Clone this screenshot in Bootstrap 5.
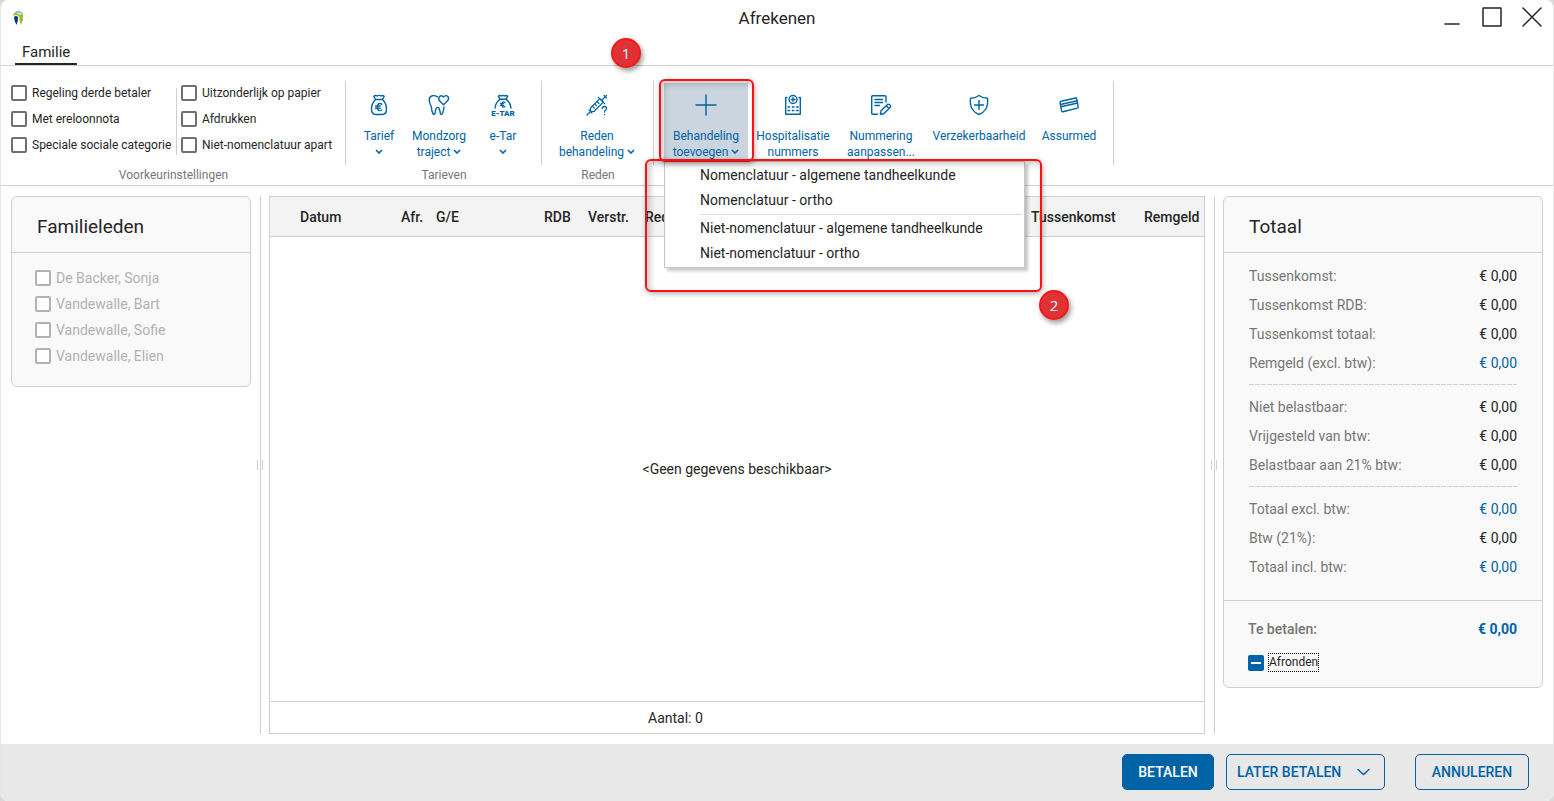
<!DOCTYPE html>
<html lang="nl">
<head>
<meta charset="utf-8">
<meta name="viewport" content="width=device-width, initial-scale=1">
<title>Afrekenen</title>
<link href="https://cdn.jsdelivr.net/npm/bootstrap@5.3.0/dist/css/bootstrap.min.css" rel="stylesheet">
<style>
  :root { --blue: #0063a6; --ink: #252525; --muted: #767676; --line: #cfcfcf; --panel: #f9f9f9; }
  body { font-family: Roboto, "Liberation Sans", sans-serif; font-size: 14px; line-height: 20px; color: var(--ink); background: #d9d9d9; }
  .app-window { background: #fff; border: solid #e6e6e6; border-width: 0 1px; border-radius: 8px; overflow: hidden; }
  svg.ico { fill: none; stroke: currentColor; stroke-width: 1.5; stroke-linecap: round; stroke-linejoin: round; display: block; }

  /* title bar */
  .titlebar { display: grid; grid-template-columns: 1fr auto 1fr; height: 40px; padding: 0 11px; }
  .titlebar h1 { font-size: 17px; line-height: 36px; margin: 0; font-weight: 400; }
  .win-controls { gap: 20px; padding-top: 7px; }
  .win-controls button { border: 0; background: none; padding: 0; color: inherit; }

  /* ribbon */
  .tabs-row { padding-left: 14px; border-bottom: 1px solid var(--line); }
  .ribbon-tab { font-size: 15px; line-height: 21px; padding: 2px 7px 0; color: var(--ink); text-decoration: none; border-bottom: 2px solid var(--ink); }
  .ribbon { padding-top: 15px; border-bottom: 1px solid var(--line); font-size: 12px; line-height: 16px; }
  .ribbon-group { text-align: center; }
  .ribbon-items { height: 84px; border-right: 1px solid var(--line); padding: 0 9px 0 8px; }
  .ribbon-items.prefs { padding: 0 10px; text-align: left; }
  .ribbon-items.actions-set { padding-left: 10px; }
  .ribbon-caption { height: 20px; line-height: 20px; color: var(--muted); }
  .pref-col { display: grid; grid-auto-rows: 24px; gap: 2px; width: 154px; }
  .pref-col.pref-first { width: 165px; }
  .pref-rule { width: 1px; height: 67px; margin: 7px 4px 0 0; background: var(--line); }
  .check { min-height: 0; margin: 0; padding: 0; display: flex; align-items: center; gap: 5px; white-space: nowrap; }
  .check .form-check-input { float: none; margin: 0; flex: none; width: 16px; height: 16px; border: 2px solid #707070; border-radius: 2px; background-color: #fff; }
  .check .form-check-input[type=checkbox]:indeterminate { background: var(--blue) linear-gradient(#fff, #fff) center / 10px 2px no-repeat; border-color: var(--blue); }
  .check .form-check-input:disabled, .check .form-check-input:disabled ~ label { opacity: 1; }
  .tool { height: 80px; margin-top: 2px; padding: 10px 0 0; border: 0; background: none; color: var(--blue); white-space: nowrap; display: flex; flex-direction: column; }
  .tool > span { width: 100%; text-align: center; }
  .tool svg.ico { width: 24px; height: 24px; margin: 0 auto 11px; stroke-width: 1.4; flex: none; }
  .tool.active-tool { background: #cbd5df; }
  .tool svg.chev { width: 8px; height: 5px; fill: none; stroke: currentColor; stroke-width: 1.6; vertical-align: 2px; }
  .w-50x { width: 50px; } .w-58x { width: 58px; } .w-70x { width: 70px; } .w-84x { width: 84px; }
  .w-86x { width: 86px; } .w-90x { width: 90px; } .w-94x { width: 94px; } .w-110x { width: 110px; }

  /* open menu and its call-outs */
  .tool-menu.dropdown-menu { left: 0; top: 80px; width: 361px; margin: 0; padding: 1px 0; border: 1px solid #c6c6c6; border-radius: 0; box-shadow: 3px 3px 3px rgba(0,0,0,.22); font-size: 14px; }
  .tool-menu .dropdown-item { padding: 0 0 0 35px; line-height: 25px; color: var(--ink); }
  .tool-menu .dropdown-divider { margin: 1px 2px 1px 35px; border-color: #ddd; opacity: 1; }
  .callout { position: absolute; border: 2px solid #fb1111; border-radius: 6px; pointer-events: none; box-shadow: 1px 2px 5px rgba(0,0,0,.3), inset 3px 3px 6px rgba(0,0,0,.22); z-index: 1010; }
  .callout-tool { left: -5px; top: -2px; width: 95px; height: 83px; }
  .callout-menu { left: -19px; top: 78px; width: 397px; height: 133px; }
  .step { position: absolute; width: 30px; height: 30px; border: 2px solid #f51818; border-radius: 50%; background: #e03235; color: #fff; font: 15px/26px "Open Sans", sans-serif; box-shadow: 2px 3px 5px rgba(0,0,0,.4); z-index: 1020; }
  .step-one { left: -53px; top: -43px; }
  .step-two { left: 375px; top: 209px; }

  /* panes */
  .workspace { padding: 10px; }
  .pane { background: var(--panel); border: 1px solid var(--line); border-radius: 6px; }
  .pane h2 { font-size: 19px; line-height: 24px; margin: 0; padding: 18px 25px 13px; font-weight: 400; border-bottom: 1px solid var(--line); }
  .family-pane { flex: 0 0 240px; }
  .family-list { padding: 12px 23px 17px; display: grid; grid-auto-rows: 26px; color: #b2b2b2; }
  .family-list .form-check-input { border-color: #b2b2b2; }
  .splitter { flex: 0 0 1px; background: var(--line); position: relative; margin: 0 8px 0 9px; }
  .splitter::after { content: ""; position: absolute; left: -3px; top: calc(50% - 5px); width: 6px; height: 10px; border: solid var(--line); border-width: 0 1px; }
  .lines-table { table-layout: fixed; border: 1px solid var(--line); border-collapse: separate; border-spacing: 0; width: 100%; }
  .lines-table th { height: 40px; padding: 0; background: #f3f3f3; font-weight: 500; white-space: nowrap; border-bottom: 1px solid var(--line); }
  .lines-table td { padding: 0; }
  .lines-table tfoot td { height: 32px; padding: 1px 0 0 3px; border-top: 1px solid var(--line); }
  .total-pane { flex: 0 0 320px; }
  .sum-block { padding: 9px 25px 18px; border-bottom: 1px solid var(--line); color: var(--muted); }
  .sum-row { display: flex; justify-content: space-between; line-height: 29px; }
  .sum-row dt { font-weight: 400; }
  .sum-row dd { margin: 0; color: var(--ink); }
  .sum-row dd.accent { color: var(--blue); }
  .sum-rule { height: 1px; margin: 6px 0 8px; border: 0; opacity: 1; background: repeating-linear-gradient(90deg, #d0d0d0 0 5px, transparent 5px 6px); }
  .pay-block { padding: 14px 25px 16px 24px; }
  .pay-block dl { margin-bottom: 10px; }
  .pay-block .sum-row { color: var(--muted); }
  .pay-block .sum-row dt { font-weight: 500; }
  .pay-block .sum-row dd { font-weight: 700; }
  .pay-block label { font-size: 12px; line-height: 17px; outline: 1px dotted #000; }

  /* action bar */
  .actions { background: #e8e8e8; padding: 10px 24px 11px; }
  .act { --bs-btn-font-size: 14px; --bs-btn-line-height: 20px; --bs-btn-padding-y: 7px; --bs-btn-padding-x: 10px; --bs-btn-border-radius: 5px;
         --bs-btn-color: var(--blue); --bs-btn-border-color: var(--blue); --bs-btn-hover-color: #fff; --bs-btn-hover-bg: var(--blue); --bs-btn-font-weight: 500; }
  .act-main { --bs-btn-color: #fff; --bs-btn-bg: var(--blue); width: 92px; margin-right: 12px; }
  .act-later { width: 159px; margin-right: 30px; }
  .act-cancel { width: 114px; }
</style>
</head>
<body>
<div class="app-window min-vh-100 d-flex flex-column">
  <header>
    <div class="titlebar">
      <svg class="mt-2" width="13" height="18" viewBox="0 0 13 18" aria-hidden="true">
        <path d="M3 4.500Q7 1 11 6Q8 4 3 4.500Z" fill="#aab9cf" stroke="#aab9cf"/>
        <path d="M1.500 8V5.500Q4 4.300 7 6.500L11 6.500Q11.600 12 9 17Q7.300 13 7.200 8.500Q4 6 1.500 8Z" fill="#93c01f"/>
        <path d="M2 9Q4 7 6 9Q6.300 13 4.500 17Q2 13 2 9Z" fill="#0a3a72"/>
      </svg>
      <h1>Afrekenen</h1>
      <div class="win-controls d-flex justify-content-end align-items-start">
        <button type="button" aria-label="Minimaliseren"><svg class="ico" width="20" height="20"><path d="M3 17H17"/></svg></button>
        <button type="button" aria-label="Maximaliseren"><svg class="ico" width="20" height="20"><rect x="1" y="1" width="18" height="18" rx=".5"/></svg></button>
        <button type="button" aria-label="Sluiten"><svg class="ico" width="20" height="20"><path d="M1 1L19 19M19 1L1 19"/></svg></button>
      </div>
    </div>
    <nav class="tabs-row d-flex"><a class="ribbon-tab" href="#">Familie</a></nav>
    <div class="ribbon d-flex">
      <section class="ribbon-group">
        <div class="ribbon-items prefs d-flex">
          <div class="pref-col pref-first">
            <div class="form-check check"><input class="form-check-input" type="checkbox" id="p1"><label for="p1">Regeling derde betaler</label></div>
            <div class="form-check check"><input class="form-check-input" type="checkbox" id="p2"><label for="p2">Met ereloonnota</label></div>
            <div class="form-check check"><input class="form-check-input" type="checkbox" id="p3"><label for="p3">Speciale sociale categorie</label></div>
          </div>
          <div class="pref-rule"></div>
          <div class="pref-col">
            <div class="form-check check"><input class="form-check-input" type="checkbox" id="p4"><label for="p4">Uitzonderlijk op papier</label></div>
            <div class="form-check check"><input class="form-check-input" type="checkbox" id="p5"><label for="p5">Afdrukken</label></div>
            <div class="form-check check"><input class="form-check-input" type="checkbox" id="p6"><label for="p6">Niet-nomenclatuur apart</label></div>
          </div>
        </div>
        <div class="ribbon-caption">Voorkeurinstellingen</div>
      </section>

      <section class="ribbon-group">
        <div class="ribbon-items d-flex">
          <button type="button" class="tool w-50x">
            <svg class="ico" viewBox="0 0 24 24"><path d="M8.500 6.500L6.800 3.200Q8.400 2 10 3Q12 1.800 14 3Q15.600 2 17.200 3.200L15.500 6.500M8.500 6.500H15.500M8.500 6.500Q4.500 10.500 4.500 16Q4.500 21.500 9 21.500H15Q19.500 21.500 19.500 16Q19.500 10.500 15.500 6.500"/><path d="M14.800 11.200Q12.500 9.800 10.900 11.500Q9.700 14 10.900 16.800Q12.500 18.300 14.800 17M8.600 13H13.200M8.600 15.200H13.200"/></svg>
            <span>Tarief<br><svg class="chev" viewBox="0 0 8 5"><path d="M1 1L4 4L7 1"/></svg></span></button>
          <button type="button" class="tool w-70x">
            <svg class="ico" viewBox="0 0 24 24"><path d="M10.500 3.800Q8 2.300 5.500 2.700Q1.800 3.700 2.300 8Q2.800 11 4.300 13.500Q4.500 18 6 20.800Q7.200 22.200 8 20.500Q8.400 17 9.300 15.200Q10.600 13.600 12 15.200Q13 17.500 13.400 20.500Q14.500 22.200 15.500 20.500Q16.800 17.500 17 14"/><path d="M16.500 11.800L12.300 7.600Q10.900 5.200 12.700 3.300Q14.800 1.900 16.500 4Q18.500 1.700 20.700 3.300Q22.400 5.400 20.800 7.600Z"/></svg>
            <span>Mondzorg<br>traject <svg class="chev" viewBox="0 0 8 5"><path d="M1 1L4 4L7 1"/></svg></span></button>
          <button type="button" class="tool w-58x">
            <svg class="ico" viewBox="0 0 24 24"><path d="M9 6.300L7.300 3.200Q8.800 2 10.200 3Q12 1.900 13.800 3Q15.200 2 16.700 3.200L15 6.300M9 6.300H15M9 6.300Q4.700 9.500 4 15M15 6.300Q19.300 9.500 20 15"/><path d="M14 9.500Q12.200 8.300 11 9.800Q10.100 11.500 11 13.200Q12.200 14.700 14 13.400M9.300 10.700H12.700M9.300 12.300H12.700" stroke-width="1.200"/><text x="12" y="22.500" text-anchor="middle" font-size="8" font-weight="900" fill="currentColor" stroke="none">E-TAR</text></svg>
            <span>e-Tar<br><svg class="chev" viewBox="0 0 8 5"><path d="M1 1L4 4L7 1"/></svg></span></button>
        </div>
        <div class="ribbon-caption">Tarieven</div>
      </section>

      <section class="ribbon-group">
        <div class="ribbon-items d-flex">
          <button type="button" class="tool w-94x">
            <svg class="ico" viewBox="0 0 24 24"><g stroke-width="1.200"><path d="M2 22L5.500 18.500M4 17L7 20M5.500 18.500V15L14.800 5.700L18.300 9.200L9 18.500Z"/><path d="M13.200 4.100L19.900 10.800M16.500 7.500L21.500 2.500M19 2.500L21.500 5M12 8.500L14 10.500M9.700 10.800L11.700 12.800M7.400 13.100L9.400 15.100"/></g><path stroke-width="1.300" d="M17.300 15.500Q17.300 13.500 19.500 13.500Q21.700 13.500 21.600 15.400Q21.400 16.600 20.400 17.200Q19.600 17.800 19.600 19M19.600 21.600V21.800"/></svg>
            <span>Reden<br>behandeling <svg class="chev" viewBox="0 0 8 5"><path d="M1 1L4 4L7 1"/></svg></span></button>
        </div>
        <div class="ribbon-caption">Reden</div>
      </section>

      <section class="ribbon-group">
        <div class="ribbon-items actions-set d-flex">
          <div class="dropdown">
            <button type="button" class="tool active-tool w-84x" data-bs-toggle="dropdown" data-bs-display="static" aria-expanded="true">
              <svg class="ico" viewBox="0 0 24 24"><path d="M12 2V22M2 12H22"/></svg>
              <span>Behandeling<br>toevoegen <svg class="chev" viewBox="0 0 8 5"><path d="M1 1L4 4L7 1"/></svg></span></button>
            <ul class="dropdown-menu tool-menu show">
              <li><a class="dropdown-item" href="#">Nomenclatuur - algemene tandheelkunde</a></li>
              <li><a class="dropdown-item" href="#">Nomenclatuur - ortho</a></li>
              <li><hr class="dropdown-divider"></li>
              <li><a class="dropdown-item" href="#">Niet-nomenclatuur - algemene tandheelkunde</a></li>
              <li><a class="dropdown-item" href="#">Niet-nomenclatuur - ortho</a></li>
            </ul>
            <div class="callout callout-tool"></div>
            <div class="callout callout-menu"></div>
            <div class="step step-one">1</div>
            <div class="step step-two">2</div>
          </div>
          <button type="button" class="tool w-90x">
            <svg class="ico" viewBox="0 0 24 24"><path d="M6 4.500H4.700V21.300H19.300V4.500H18"/><circle cx="12" cy="6.500" r="4"/><path d="M12 4.700V8.300M10.200 6.500H13.800"/><path d="M6.500 14H18M6.500 17.500H18" stroke-linecap="butt" stroke-dasharray="2.600 1.700"/></svg>
            <span>Hospitalisatie<br>nummers</span></button>
          <button type="button" class="tool w-86x">
            <svg class="ico" viewBox="0 0 24 24"><path d="M17 9V3.700Q17 2.700 16 2.700H3.700Q2.700 2.700 2.700 3.700V20.300Q2.700 21.300 3.700 21.300H8.500M6 6.500H13.500M6 9.500H13.500M6 12.500H10.500"/><path d="M11.300 21.300L12 17.800L18.600 11.400Q19.400 10.800 20.300 11.600L21.500 12.800Q22 13.600 21.300 14.300L14.800 20.700ZM17.200 12.800L20 15.600"/></svg>
            <span>Nummering<br>aanpassen...</span></button>
          <button type="button" class="tool w-110x">
            <svg class="ico" viewBox="0 0 24 24"><path d="M12 2.500Q15.500 5.200 20.500 5.200Q21.300 12 18.800 16Q16.500 19.800 12 21.500Q7.500 19.800 5.200 16Q2.700 12 3.500 5.200Q8.500 5.200 12 2.500Z"/><path d="M12 7.500V16.500M7.500 12H16.500"/></svg>
            <span>Verzekerbaarheid</span></button>
          <button type="button" class="tool w-70x">
            <svg class="ico" viewBox="0 0 24 24"><path d="M4.200 8.200L18.500 5Q19.500 4.900 19.800 5.800L21.200 13.800Q21.200 14.800 20.400 15.100L6 18.800Q5 18.900 4.700 18L3 9.600Q3 8.500 4.200 8.200ZM3.500 11.500L20.200 7.700M4 13.800L20.600 10"/></svg>
            <span>Assurmed</span></button>
        </div>
      </section>
    </div>
  </header>

  <main class="workspace d-flex flex-grow-1">
    <section class="pane family-pane align-self-start">
      <h2>Familieleden</h2>
      <div class="family-list">
        <div class="form-check check"><input class="form-check-input" type="checkbox" id="f1" disabled><label for="f1">De Backer, Sonja</label></div>
        <div class="form-check check"><input class="form-check-input" type="checkbox" id="f2" disabled><label for="f2">Vandewalle, Bart</label></div>
        <div class="form-check check"><input class="form-check-input" type="checkbox" id="f3" disabled><label for="f3">Vandewalle, Sofie</label></div>
        <div class="form-check check"><input class="form-check-input" type="checkbox" id="f4" disabled><label for="f4">Vandewalle, Elien</label></div>
      </div>
    </section>
    <div class="splitter"></div>
    <div class="flex-fill d-flex">
      <table class="lines-table">
        <colgroup><col style="width:30px"><col style="width:101px"><col style="width:35px"><col style="width:108px"><col style="width:44px"><col style="width:57px"><col><col style="width:113px"><col style="width:60px"></colgroup>
        <thead><tr><th></th><th>Datum</th><th>Afr.</th><th>G/E</th><th>RDB</th><th>Verstr.</th><th>Reden</th><th>Tussenkomst</th><th>Remgeld</th></tr></thead>
        <tbody><tr><td colspan="9" class="text-center align-middle">&lt;Geen gegevens beschikbaar&gt;</td></tr></tbody>
        <tfoot><tr><td colspan="6"></td><td colspan="3">Aantal: 0</td></tr></tfoot>
      </table>
    </div>
    <div class="splitter"></div>
    <section class="pane total-pane align-self-start">
      <h2>Totaal</h2>
      <div class="sum-block">
        <dl class="m-0">
          <div class="sum-row"><dt>Tussenkomst:</dt><dd>€ 0,00</dd></div>
          <div class="sum-row"><dt>Tussenkomst RDB:</dt><dd>€ 0,00</dd></div>
          <div class="sum-row"><dt>Tussenkomst totaal:</dt><dd>€ 0,00</dd></div>
          <div class="sum-row"><dt>Remgeld (excl. btw):</dt><dd class="accent">€ 0,00</dd></div>
        </dl>
        <hr class="sum-rule">
        <dl class="m-0">
          <div class="sum-row"><dt>Niet belastbaar:</dt><dd>€ 0,00</dd></div>
          <div class="sum-row"><dt>Vrijgesteld van btw:</dt><dd>€ 0,00</dd></div>
          <div class="sum-row"><dt>Belastbaar aan 21% btw:</dt><dd>€ 0,00</dd></div>
        </dl>
        <hr class="sum-rule">
        <dl class="m-0">
          <div class="sum-row"><dt>Totaal excl. btw:</dt><dd class="accent">€ 0,00</dd></div>
          <div class="sum-row"><dt>Btw (21%):</dt><dd>€ 0,00</dd></div>
          <div class="sum-row"><dt>Totaal incl. btw:</dt><dd class="accent">€ 0,00</dd></div>
        </dl>
      </div>
      <div class="pay-block">
        <dl><div class="sum-row"><dt>Te betalen:</dt><dd class="accent">€ 0,00</dd></div></dl>
        <div class="form-check check"><input class="form-check-input" type="checkbox" id="round"><label for="round">Afronden</label></div>
      </div>
    </section>
  </main>

  <footer class="actions d-flex justify-content-end">
    <button type="button" class="btn act act-main">BETALEN</button>
    <button type="button" class="btn act act-later d-flex align-items-center justify-content-between">LATER BETALEN
      <svg class="ico me-1" width="13" height="8" viewBox="0 0 13 8"><path d="M1 1.500L6.500 6.500L12 1.500"/></svg></button>
    <button type="button" class="btn act act-cancel">ANNULEREN</button>
  </footer>
</div>
<script src="https://cdn.jsdelivr.net/npm/bootstrap@5.3.0/dist/js/bootstrap.bundle.min.js"></script>
<script>
  // rounding is neither on nor off until the user picks
  document.getElementById('round').indeterminate = true;
</script>
</body>
</html>
